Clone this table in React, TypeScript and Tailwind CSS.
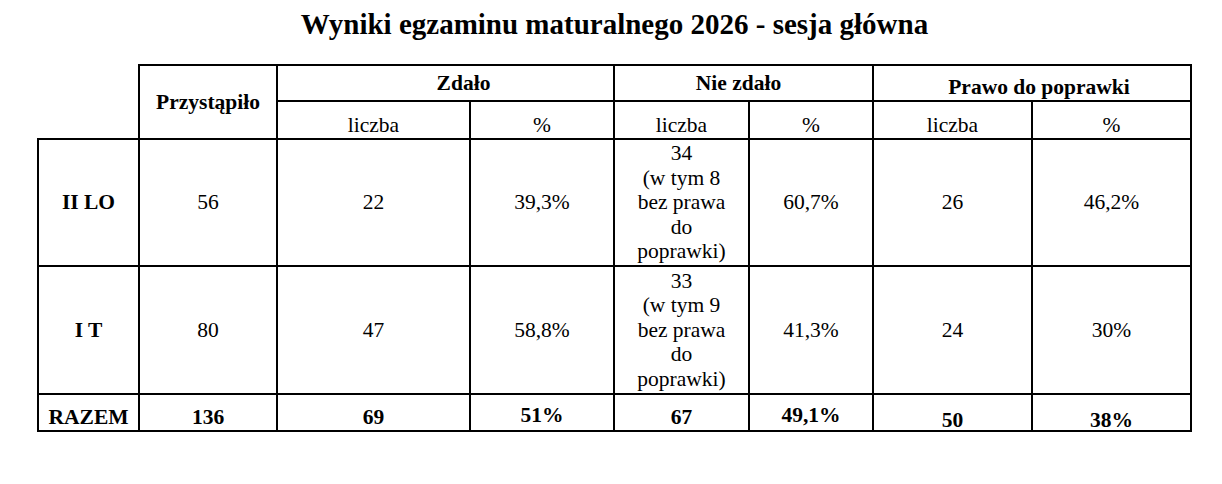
import React from "react";

const base = "border-r-2 border-b-2 border-black flex justify-center text-center";

export default function App() {
  return (
    <div className="bg-white w-[1222px] h-[484px] text-black font-[family-name:'Liberation_Serif','Times_New_Roman',serif]">
      <div className="ml-[37px] w-[1155px] pt-[4px] text-center text-[29px] leading-[40px] font-bold">
        Wyniki egzaminu maturalnego 2026 - sesja główna
      </div>
      <div className="ml-[37px] mt-[20px] grid grid-cols-[103px_138px_193px_144px_135px_124px_159px_159px] grid-rows-[38px_38px_127px_128px_37px] text-[21.5px] leading-[25px]">
        {/* header row 1 */}
        <div className="row-span-2 border-r-2 border-b-2 border-black" />
        <div className={`${base} row-span-2 border-t-2 items-center font-bold`}>Przystąpiło</div>
        <div className={`${base} col-span-2 border-t-2 items-center font-bold pl-[36px]`}>Zdało</div>
        <div className={`${base} col-span-2 border-t-2 items-center font-bold pr-[10px]`}>Nie zdało</div>
        <div className={`${base} col-span-2 border-t-2 items-end font-bold pl-[14px]`}>Prawo do poprawki</div>
        {/* header row 2 */}
        <div className={`${base} items-end`}>liczba</div>
        <div className={`${base} items-end`}>%</div>
        <div className={`${base} items-end`}>liczba</div>
        <div className={`${base} items-end`}>%</div>
        <div className={`${base} items-end`}>liczba</div>
        <div className={`${base} items-end`}>%</div>
        {/* II LO */}
        <div className={`${base} border-l-2 items-center font-bold`}>II LO</div>
        <div className={`${base} items-center`}>56</div>
        <div className={`${base} items-center`}>22</div>
        <div className={`${base} items-center`}>39,3%</div>
        <div className={`${base} items-center leading-[24.5px]`}>
          <span>
            34
            <br />
            (w tym 8
            <br />
            bez prawa
            <br />
            do
            <br />
            poprawki)
          </span>
        </div>
        <div className={`${base} items-center`}>60,7%</div>
        <div className={`${base} items-center`}>26</div>
        <div className={`${base} items-center`}>46,2%</div>
        {/* I T */}
        <div className={`${base} border-l-2 items-center font-bold`}>I T</div>
        <div className={`${base} items-center`}>80</div>
        <div className={`${base} items-center`}>47</div>
        <div className={`${base} items-center`}>58,8%</div>
        <div className={`${base} items-center leading-[24.5px]`}>
          <span>
            33
            <br />
            (w tym 9
            <br />
            bez prawa
            <br />
            do
            <br />
            poprawki)
          </span>
        </div>
        <div className={`${base} items-center`}>41,3%</div>
        <div className={`${base} items-center`}>24</div>
        <div className={`${base} items-center`}>30%</div>
        {/* RAZEM */}
        <div className={`${base} border-l-2 items-end font-bold`}>RAZEM</div>
        <div className={`${base} items-end font-bold`}>136</div>
        <div className={`${base} items-end font-bold`}>69</div>
        <div className={`${base} items-end font-bold pb-[2px]`}>51%</div>
        <div className={`${base} items-end font-bold`}>67</div>
        <div className={`${base} items-end font-bold pb-[2px]`}>49,1%</div>
        <div className={`${base} items-end font-bold leading-[19px]`}>50</div>
        <div className={`${base} items-end font-bold leading-[19px]`}>38%</div>
      </div>
    </div>
  );
}
